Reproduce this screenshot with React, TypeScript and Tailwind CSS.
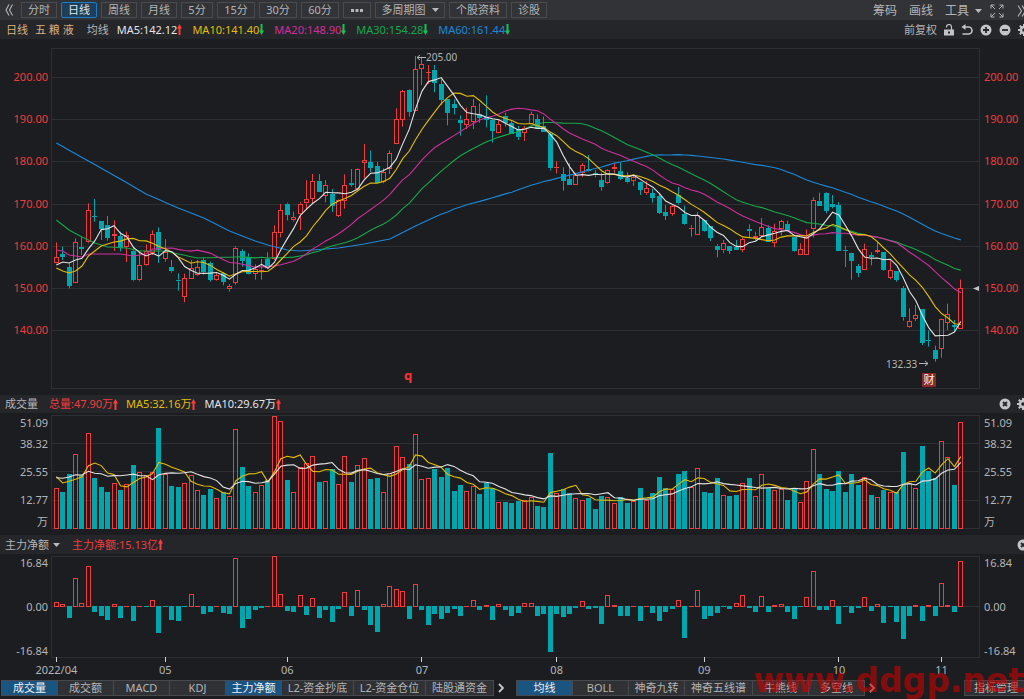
import type { ReactNode } from "react";

type Dir = 1 | -1;
// dir, high, low, body top, body bottom
type Bar = [Dir, number, number, number, number];
type Point = [number, number];

const UP = "#f03c3c";
const DOWN = "#00a6ad";
const GRID = "#2e2f33";
const YELLOW = "#e3bd09";
const WHITE = "#e4e4e4";

// bar values are thirds of a unit below each segment's base
const segments: { base: number; bars: Bar[] }[] = [
  {
    base: 141,
    bars: [
      [1, 187, 250, 231, 248], [-1, 200, 240, 222, 230], [-1, 250, 325, 261, 318], [1, 175, 309, 187, 308],
      [-1, 172, 225, 200, 207], [1, 70, 190, 91, 187], [-1, 57, 125, 108, 111], [-1, 123, 180, 123, 148],
      [-1, 108, 182, 134, 174], [1, 121, 213, 162, 168], [-1, 155, 214, 168, 204], [1, 155, 246, 166, 202],
      [-1, 200, 304, 212, 301], [1, 213, 304, 256, 301], [1, 193, 258, 213, 256], [1, 151, 225, 163, 218],
      [-1, 142, 249, 156, 209], [1, 177, 245, 216, 237], [-1, 240, 278, 260, 274], [-1, 280, 332, 299, 304],
      [1, 281, 367, 294, 350], [1, 240, 297, 265, 296], [1, 240, 287, 261, 284], [-1, 234, 284, 240, 277],
      [-1, 245, 305, 249, 299], [1, 280, 302, 286, 300], [-1, 277, 316, 280, 306], [1, 312, 335, 319, 328],
      [1, 198, 314, 203, 308], [-1, 208, 260, 213, 243], [-1, 220, 283, 230, 282], [1, 253, 299, 268, 281],
      [1, 237, 299, 269, 272], [-1, 217, 266, 237, 262],
    ],
  },
  {
    base: 1,
    bars: [
      [1, 556, 660, 576, 657], [1, 492, 592, 511, 580], [-1, 488, 541, 491, 525], [1, 515, 545, 532, 541],
      [1, 486, 570, 491, 523], [1, 421, 508, 478, 490], [1, 402, 490, 424, 476], [-1, 402, 455, 422, 455],
      [1, 420, 487, 436, 467], [-1, 447, 516, 462, 498], [1, 478, 531, 481, 528], [1, 403, 506, 436, 482],
      [-1, 387, 440, 428, 434], [1, 385, 447, 387, 447], [1, 312, 415, 360, 368], [-1, 332, 396, 367, 383],
      [-1, 366, 430, 378, 430], [1, 385, 430, 397, 427], [1, 331, 402, 340, 386], [1, 205, 313, 238, 313],
      [1, 150, 260, 154, 239], [-1, 148, 230, 150, 215], [1, 48, 213, 87, 212], [1, 50, 135, 72, 86],
      [1, 75, 132, 96, 99], [-1, 75, 157, 89, 129], [-1, 118, 195, 133, 180], [-1, 178, 256, 178, 218],
      [-1, 178, 223, 193, 204], [-1, 226, 287, 239, 248], [1, 203, 267, 238, 254], [1, 177, 267, 197, 245],
      [-1, 190, 248, 222, 234], [-1, 166, 262, 230, 240], [-1, 238, 308, 240, 272], [1, 240, 280, 253, 278],
    ],
  },
  {
    base: 51,
    bars: [
      [-1, 68, 110, 77, 100], [-1, 90, 131, 99, 131], [-1, 108, 150, 118, 142], [1, 108, 153, 114, 128],
      [1, 65, 103, 73, 101], [-1, 73, 117, 88, 116], [-1, 80, 126, 107, 126], [-1, 126, 242, 133, 235],
      [1, 214, 250, 231, 235], [-1, 232, 302, 253, 272], [-1, 220, 285, 267, 285], [1, 248, 285, 255, 284],
      [1, 219, 261, 226, 248], [-1, 195, 245, 237, 243], [-1, 240, 262, 250, 256], [-1, 248, 302, 270, 291],
      [1, 238, 282, 241, 280], [1, 218, 248, 231, 238], [-1, 218, 270, 243, 267], [-1, 247, 280, 263, 277],
      [1, 258, 288, 262, 272], [-1, 275, 315, 276, 300], [1, 273, 315, 295, 310], [-1, 296, 338, 309, 324],
      [-1, 311, 372, 319, 368], [-1, 345, 390, 366, 378], [1, 346, 377, 349, 371], [-1, 291, 344, 315, 340],
      [-1, 347, 404, 372, 402], [1, 405, 440, 413, 416], [1, 366, 435, 375, 434], [-1, 390, 425, 390, 423],
      [-1, 408, 453, 408, 444], [-1, 462, 502, 467, 480], [1, 450, 489, 459, 481], [-1, 467, 492, 467, 483],
      [-1, 450, 480, 470, 480],
    ],
  },
  {
    base: 111,
    bars: [
      [1, 263, 306, 267, 300], [-1, 223, 262, 236, 243], [1, 245, 272, 257, 265], [1, 204, 260, 232, 257],
      [-1, 226, 276, 235, 275], [1, 221, 292, 243, 278], [1, 210, 256, 214, 238], [-1, 212, 244, 222, 244],
      [-1, 262, 305, 262, 303], [1, 280, 314, 298, 314], [1, 238, 314, 262, 314], [1, 142, 262, 150, 238],
      [-1, 128, 168, 152, 168], [-1, 126, 190, 128, 182], [-1, 135, 175, 161, 171], [-1, 156, 303, 166, 303],
      [-1, 287, 351, 299, 304], [-1, 308, 389, 309, 332], [-1, 342, 381, 349, 369], [1, 281, 359, 298, 359],
      [-1, 307, 346, 316, 320], [1, 275, 310, 301, 305], [-1, 306, 362, 306, 359], [1, 330, 388, 360, 383],
      [-1, 362, 395, 362, 389], [-1, 408, 512, 415, 502], [1, 475, 533, 514, 531], [1, 465, 513, 496, 506],
      [-1, 477, 585, 477, 579], [-1, 541, 590, 570, 573], [-1, 587, 635, 600, 626], [1, 506, 623, 508, 597],
      [1, 461, 540, 493, 518], [-1, 510, 543, 525, 530], [1, 389, 537, 415, 536],
    ],
  },
];

const volumes = [
  124, 112, 164, 224, 161, 287, 153, 126, 112, 139, 118, 136, 192, 172, 161, 172, 302, 164, 128, 125, 137, 163, 117, 103,
  120, 92, 111, 100, 301, 187, 128, 112, 131, 146, 340, 325, 148, 112, 186, 199, 219, 142, 145, 180, 134, 220, 140, 192,
  212, 149, 152, 110, 167, 248, 215, 195, 286, 149, 154, 180, 156, 182, 113, 132, 115, 129, 105, 139, 122, 82, 80, 78,
  84, 88, 95, 69, 66, 228, 107, 120, 108, 92, 88, 92, 60, 99, 95, 77, 96, 77, 84, 123, 87, 108, 156, 124, 120, 165, 174,
  126, 182, 110, 107, 154, 101, 99, 102, 137, 154, 98, 164, 122, 116, 121, 88, 122, 82, 143, 239, 165, 120, 115, 173,
  112, 165, 132, 157, 102, 95, 118, 110, 112, 231, 139, 123, 249, 173, 154, 263, 215, 132, 322,
];

const netFlow = [
  15, 9, -37, 87, 12, 124, -18, -29, -41, 9, -35, 3, -46, 3, -4, 20, -82, -1, -43, -46, -1, 39, 3, -25, -18, 1, -22, -23,
  147, -65, -40, -13, -7, 1, 152, 39, -16, -18, 36, -26, 28, -37, -13, -49, -10, 45, -29, 50, -13, -56, -79, 9, 64, 53,
  48, -40, 70, -13, -56, -25, -40, -20, -10, -31, 3, 22, -13, 6, -43, 9, -13, -31, -22, 11, 11, -29, -23, -139, -23,
  -34, -25, -7, 18, -10, -7, -54, 36, 6, -29, -29, 3, -46, 3, -20, -46, -18, -10, 20, -95, 1, 51, -40, -29, -20, -4,
  -10, 11, 36, -7, -18, 33, -18, 6, 9, -18, -38, -4, 30, 108, -13, -13, 20, -53, -4, -20, -7, 30, -15, 9, -52, -4, -48,
  -100, -31, 6, -46, 6, -29, 72, 6, -19, 138,
];

const candles = segments.flatMap(({ base, bars }) =>
  bars.map(([dir, ...v]) => {
    const [high, low, top, bottom] = v.map((n) => base + n / 3);
    return { dir, high, low, top, bottom };
  })
);
const closes = candles.map((c) => (c.dir > 0 ? c.top : c.bottom));

const xAt = (i: number) => 56.3 + i * 6.415;
const snap = (v: number) => Math.floor(v) + 0.5;

// the first bars have no full window, so the average starts from known points
function average(values: number[], period: number, lead: Point[]) {
  return values.map((_, i) => {
    if (i >= period - 1) {
      return values.slice(i - period + 1, i + 1).reduce((a, b) => a + b, 0) / period;
    }
    const next = lead.findIndex((p) => p[0] >= i);
    if (next === -1) return lead[lead.length - 1][1];
    if (next === 0) return lead[0][1];
    const [x0, y0] = lead[next - 1];
    const [x1, y1] = lead[next];
    return y0 + ((y1 - y0) * (i - x0)) / (x1 - x0);
  });
}

const toPoints = (ys: number[]) => ys.map((y, i) => `${xAt(i).toFixed(1)},${y.toFixed(1)}`).join(" ");

const priceLines = [
  {
    color: "#1e88d8",
    ys: average(closes, 60, [
      [0, 104], [5, 122], [10, 140], [14, 155], [19, 169], [23, 179], [27, 192], [31, 202], [33, 206], [36, 211],
      [38, 212], [42, 210], [44, 209], [48, 205], [52, 200], [56, 187], [58, 181],
    ]),
  },
  {
    color: "#16a84a",
    ys: average(closes, 30, [
      [0, 181], [2, 191], [4, 198], [6, 204], [8, 208], [11, 209], [13, 212], [17, 212], [19, 215], [22, 219], [28, 218],
    ]),
  },
  {
    color: "#cf2f9c",
    ys: average(closes, 20, [
      [0, 211], [1, 212], [2, 216], [4, 218], [5, 215], [10, 215], [12, 217], [14, 215], [15, 210], [18, 209],
    ]),
  },
  {
    color: YELLOW,
    ys: average(closes, 10, [[0, 229], [1, 232], [2, 234], [3, 232], [4, 227], [5, 217], [6, 212], [7, 207], [8, 205]]),
  },
  { color: WHITE, ys: average(closes, 5, [[0, 226], [1, 223], [2, 224], [3, 221]]) },
];

const volumeLines = [
  { color: YELLOW, ys: average(volumes, 5, [[0, 157], [1, 138], [2, 143], [3, 149]]) },
  {
    color: WHITE,
    ys: average(volumes, 10, [[0, 154], [1, 152], [2, 156], [3, 163], [4, 162], [5, 173], [6, 167], [7, 166], [8, 158]]),
  },
];

const periods = [
  { label: "分时", cls: "w-9" },
  { label: "日线", cls: "w-9", active: true },
  { label: "周线", cls: "w-9" },
  { label: "月线", cls: "w-9" },
  { label: "5分", cls: "w-8" },
  { label: "15分", cls: "w-[38px]" },
  { label: "30分", cls: "w-[38px]" },
  { label: "60分", cls: "w-[38px]" },
];

const averages = [
  { label: "MA5:142.12", cls: "text-[#e4e4e4]", up: true },
  { label: "MA10:141.40", cls: "text-[#e3bd09]", up: false },
  { label: "MA20:148.90", cls: "text-[#cf2f9c]", up: false },
  { label: "MA30:154.28", cls: "text-[#16a84a]", up: false },
  { label: "MA60:161.44", cls: "text-[#1e88d8]", up: false },
];

const indicators = [
  { label: "成交量", cls: "w-14", active: true },
  { label: "成交额", cls: "w-14" },
  { label: "MACD", cls: "w-14" },
  { label: "KDJ", cls: "w-14" },
  { label: "主力净额", cls: "w-14", active: true },
  { label: "L2-资金抄底", cls: "w-[72px]" },
  { label: "L2-资金仓位", cls: "w-[72px]" },
  { label: "陆股通资金", cls: "w-[68px]" },
];

const overlays = [
  { label: "均线", cls: "w-14", active: true },
  { label: "BOLL", cls: "w-14" },
  { label: "神奇九转", cls: "w-14" },
  { label: "神奇五线谱", cls: "w-[68px]" },
  { label: "牛熊线", cls: "w-14" },
  { label: "多空线", cls: "w-14" },
];

const months: [string, number][] = [
  ["2022/04", 0], ["05", 17], ["06", 36], ["07", 57], ["08", 78], ["09", 101], ["10", 122], ["11", 138],
];

function Arrow({ up }: { up: boolean }) {
  return (
    <svg width="5" height="11" viewBox="0 0 5 11" className="shrink-0">
      <path
        d={up ? "M2.5 0L5 4.5H3.5V11H1.5V4.5H0z" : "M2.5 11L5 6.5H3.5V0H1.5V6.5H0z"}
        fill={up ? "#ff3b3b" : "#12c455"}
      />
    </svg>
  );
}

function Caret() {
  return (
    <svg width="7" height="4" viewBox="0 0 7 4" className="shrink-0">
      <path d="M0 0H7L3.5 4z" fill="#b9babc" />
    </svg>
  );
}

function RoundIcon({ d }: { d: string }) {
  return (
    <svg width="12" height="12" viewBox="0 0 12 12">
      <circle cx="6" cy="6" r="5.5" fill="#c3c4c6" />
      <path d={d} stroke="#25262a" strokeWidth="1.8" fill="none" />
    </svg>
  );
}

function GearIcon() {
  return (
    <svg width="12" height="12" viewBox="0 0 12 12">
      <circle cx="6" cy="6" r="3" fill="none" stroke="#c3c4c6" strokeWidth="2.4" />
      <path
        d="M6 0V2.5M6 9.5V12M0 6H2.5M9.5 6H12M1.8 1.8L3.5 3.5M8.5 8.5L10.2 10.2M10.2 1.8L8.5 3.5M3.5 8.5L1.8 10.2"
        stroke="#c3c4c6"
        strokeWidth="2"
      />
    </svg>
  );
}

function IconButton({ label, children }: { label: string; children: ReactNode }) {
  return (
    <button type="button" aria-label={label} className="flex shrink-0 items-center">
      {children}
    </button>
  );
}

function ToolButton({ cls, active, children }: { cls: string; active?: boolean; children: ReactNode }) {
  return (
    <button
      type="button"
      className={`flex h-4 shrink-0 items-center justify-center gap-1.5 border whitespace-nowrap ${cls} ${
        active ? "rounded-xs border-[#1c7fc4] bg-[#1d3f5b] text-[#e6e6e6]" : "border-[#4a4b4e] text-[#b4b5b7]"
      }`}
    >
      {children}
    </button>
  );
}

function TabBar({ tabs }: { tabs: { label: string; cls: string; active?: boolean }[] }) {
  return (
    <div className="flex shrink-0 border-r border-[#48494d]">
      {tabs.map((t) => (
        <button
          key={t.label}
          type="button"
          className={`flex h-4 items-center justify-center border-y border-l border-[#48494d] whitespace-nowrap ${t.cls} ${
            t.active ? "bg-[#1a5582] text-[#f0f0f0]" : "bg-[#303135] text-[#b4b5b7]"
          }`}
        >
          {t.label}
        </button>
      ))}
    </div>
  );
}

function Chevron() {
  return (
    <svg width="6" height="10" viewBox="0 0 6 10">
      <path d="M1 1L5 5L1 9" fill="none" stroke="#c8c9cb" strokeWidth="1.8" />
    </svg>
  );
}

function AxisLabels({ rows, fill }: { rows: [string, number][]; fill: string }) {
  return (
    <g fill={fill}>
      {rows.map(([text, y]) => (
        <g key={text}>
          <text x="48" y={y} textAnchor="end">{text}</text>
          <text x="984" y={y}>{text}</text>
        </g>
      ))}
    </g>
  );
}

function Column({ x, y, height, up }: { x: number; y: number; height: number; up: boolean }) {
  const left = Math.floor(x) - 2;
  if (!up || height < 2) {
    return <rect x={left} y={y} width="5" height={Math.max(height, 1)} fill={up ? UP : DOWN} />;
  }
  return <rect x={left + 0.5} y={y + 0.5} width="4" height={height - 1} fill="none" stroke={UP} />;
}

function PriceChart() {
  const rows = [200, 190, 180, 170, 160, 150, 140].map((p, i): [string, number] => [p.toFixed(2), Math.round(42 + i * 42.2)]);
  return (
    <svg viewBox="0 0 1024 356" className="block w-full text-[11px]" role="img" aria-label="日线">
      <rect x="51.5" y="9.5" width="928" height="340" fill="none" stroke={GRID} />
      {rows.map(([p, y]) => (
        <line key={p} x1="52" x2="979" y1={y - 3.5} y2={y - 3.5} stroke={GRID} />
      ))}
      <AxisLabels rows={rows} fill="#f03c3c" />
      {candles.map((c, i) => {
        const x = snap(xAt(i));
        const color = c.dir > 0 ? UP : DOWN;
        const top = Math.round(c.top);
        const height = Math.max(Math.round(c.bottom) - top, 1);
        return (
          <g key={i}>
            <line x1={x} x2={x} y1={c.high} y2={c.top} stroke={color} />
            <line x1={x} x2={x} y1={c.bottom} y2={c.low} stroke={color} />
            <Column x={x} y={top} height={height} up={c.dir > 0} />
          </g>
        );
      })}
      {priceLines.map((l) => (
        <polyline key={l.color} points={toPoints(l.ys)} fill="none" stroke={l.color} strokeWidth="1.1" />
      ))}
      <g fill="#b4b5b7" className="text-[10px]">
        <text x="426" y="22">205.00</text>
        <text x="886" y="329">132.33</text>
      </g>
      <path d="M417 18.5H426M420 16L417 18.5L420 21M919 324.5H928M925 322L928 324.5L925 327" fill="none" stroke="#b4b5b7" />
      <path d="M973 249.5L979 247V252z" fill="#c3c4c6" />
      <text x="404" y="341" fill="#ff3333" className="text-[13px] font-bold">q</text>
      <rect x="922" y="334" width="14" height="14" rx="1" fill="#8a2a2d" />
      <text x="929" y="345" textAnchor="middle" fill="#f4f4f4">财</text>
    </svg>
  );
}

function VolumeChart() {
  return (
    <svg viewBox="0 0 1024 122" className="block w-full text-[11px]" role="img" aria-label="成交量">
      <rect x="51.5" y="2.5" width="928" height="113" fill="none" stroke={GRID} />
      {[30.5, 58.5, 87.5].map((y) => (
        <line key={y} x1="52" x2="979" y1={y} y2={y} stroke={GRID} />
      ))}
      <AxisLabels rows={[["51.09", 14], ["38.32", 35], ["25.55", 63], ["12.77", 91], ["万", 113]]} fill="#b4b5b7" />
      {volumes.map((v, i) => {
        const height = Math.round(v / 3);
        return <Column key={i} x={xAt(i)} y={116 - height} height={height} up={candles[i].dir > 0} />;
      })}
      {volumeLines.map((l) => (
        <polyline
          key={l.color}
          points={toPoints(l.ys.map((v) => 116 - v / 3))}
          fill="none"
          stroke={l.color}
          strokeWidth="1.1"
        />
      ))}
    </svg>
  );
}

function NetFlowChart() {
  return (
    <svg viewBox="0 0 1024 125" className="block w-full text-[11px]" role="img" aria-label="主力净额">
      <path d="M51.5 2.5H979.5V103.5H51.5zM52 52.5H979" fill="none" stroke={GRID} />
      <AxisLabels rows={[["16.84", 13], ["0.00", 57], ["-16.84", 101]]} fill="#b4b5b7" />
      {netFlow.map((v, i) => {
        const height = Math.max(Math.round(Math.abs(v) / 3), 1);
        return <Column key={i} x={xAt(i)} y={v > 0 ? 53 - height : 52} height={height} up={v > 0} />;
      })}
      {months.map(([label, i]) => (
        <g key={label}>
          <line x1={snap(xAt(i))} x2={snap(xAt(i))} y1="103" y2="108" stroke="#d0d0d0" />
          <text x={xAt(i)} y="120" textAnchor="middle" fill="#b4b5b7">{label}</text>
        </g>
      ))}
    </svg>
  );
}

export default function App() {
  return (
    <main className="relative flex min-h-screen flex-col overflow-hidden bg-[#1c1d20] font-['Noto_Sans','Noto_Sans_CJK_SC',sans-serif] text-[11px] leading-4 text-[#b4b5b7]">
      <nav className="flex h-5 items-center overflow-hidden bg-[#323336] pl-[5px]">
        <IconButton label="收起">
          <svg width="8" height="12" viewBox="0 0 8 12" className="mr-2">
            <path d="M4 0.5L1 6L4 11.5M7.5 0.5L4.5 6L7.5 11.5" fill="none" stroke="#b4b5b7" strokeWidth="1.1" />
          </svg>
        </IconButton>
        <div className="flex gap-1">
          {periods.map((p) => (
            <ToolButton key={p.label} cls={p.cls} active={p.active}>
              {p.label}
            </ToolButton>
          ))}
          <ToolButton cls="w-7">
            <svg width="12" height="3" viewBox="0 0 12 3">
              <path d="M0 0H3V3H0zM4.5 0H7.5V3H4.5zM9 0H12V3H9z" fill="#b4b5b7" />
            </svg>
          </ToolButton>
          <ToolButton cls="w-[70px]">
            多周期图
            <Caret />
          </ToolButton>
          <ToolButton cls="w-[58px]">个股资料</ToolButton>
          <ToolButton cls="w-9">诊股</ToolButton>
        </div>
        <div className="-mr-0.5 ml-auto flex shrink-0 items-center gap-3 pt-px pl-3 text-[12px]">
          <button type="button">筹码</button>
          <button type="button">画线</button>
          <div className="flex items-center gap-2">
            <button type="button" className="flex items-center gap-1.5">
              工具
              <Caret />
            </button>
            <IconButton label="全屏">
              <svg width="14" height="14" viewBox="0 0 14 14">
                <path
                  d="M1 4.5V1H4.5M1 1L5 5M9.5 1H13V4.5M13 1L9 5M1 9.5V13H4.5M1 13L5 9M9.5 13H13V9.5M13 13L9 9"
                  fill="none"
                  stroke="#b4b5b7"
                />
              </svg>
            </IconButton>
          </div>
          <IconButton label="展开">
            <svg width="10" height="12" viewBox="0 0 10 12">
              <path d="M2 0.5L5.5 6L2 11.5M6 0.5L9.5 6L6 11.5" fill="none" stroke="#b4b5b7" strokeWidth="1.1" />
            </svg>
          </IconButton>
        </div>
      </nav>

      <header className="flex h-[19px] items-center overflow-hidden bg-[#25262a] pl-1.5 whitespace-nowrap">
        <span className="text-[#dcb182]">日线</span>
        <h1 className="ml-[7px] text-[#dcb182]">五 粮 液</h1>
        <span className="mr-2 ml-[13px]">均线</span>
        <div className="flex gap-2.5">
          {averages.map((a) => (
            <span key={a.label} className={`flex items-center ${a.cls}`}>
              {a.label}
              <Arrow up={a.up} />
            </span>
          ))}
        </div>
        <div className="-mr-1.5 ml-auto flex shrink-0 items-center gap-[7px] pl-3">
          <button type="button">前复权</button>
          <IconButton label="锁定">
            <svg width="10" height="12" viewBox="0 0 10 12">
              <path d="M2.5 3.5V3A2.5 2.5 0 0 1 7.5 3V6" fill="none" stroke="#c3c4c6" strokeWidth="1.2" />
              <path d="M0 5.5H10V11.5H0zM4 7.5V9.5H6V7.5z" fill="#c3c4c6" fillRule="evenodd" />
            </svg>
          </IconButton>
          <IconButton label="撤销">
            <svg width="12" height="12" viewBox="0 0 12 12">
              <path d="M3 3H7.5A3.5 3.5 0 0 1 7.5 10H1.5" fill="none" stroke="#c3c4c6" strokeWidth="1.6" />
              <path d="M0.5 3L4.5 0V6z" fill="#c3c4c6" />
            </svg>
          </IconButton>
          <IconButton label="放大">
            <RoundIcon d="M6 3V9M3 6H9" />
          </IconButton>
          <IconButton label="缩小">
            <RoundIcon d="M3 6H9" />
          </IconButton>
          <IconButton label="设置">
            <GearIcon />
          </IconButton>
        </div>
      </header>

      <PriceChart />

      <section>
        <div className="flex h-[18px] items-center gap-2 overflow-hidden bg-[#25262a] pl-[5px] whitespace-nowrap">
          <h2 className="mr-[3px]">成交量</h2>
          <span className="flex items-center text-[#f03c3c]">
            总量:47.90万
            <Arrow up />
          </span>
          <span className="flex items-center text-[#e3bd09]">
            MA5:32.16万
            <Arrow up />
          </span>
          <span className="flex items-center text-[#e4e4e4]">
            MA10:29.67万
            <Arrow up />
          </span>
          <div className="-mr-[5px] ml-auto flex gap-1.5">
            <IconButton label="关闭成交量">
              <RoundIcon d="M4 4L8 8M8 4L4 8" />
            </IconButton>
            <IconButton label="设置成交量">
              <GearIcon />
            </IconButton>
          </div>
        </div>
        <VolumeChart />
      </section>

      <section>
        <div className="flex h-[19px] items-center overflow-hidden bg-[#25262a] pl-[5px] whitespace-nowrap">
          <button type="button" className="flex items-center gap-1">
            主力净额
            <Caret />
          </button>
          <span className="ml-3 flex items-center text-[#f03c3c]">
            主力净额:15.13亿
            <Arrow up />
          </span>
          <div className="-mr-[5px] ml-auto flex">
            <IconButton label="关闭主力净额">
              <RoundIcon d="M4 4L8 8M8 4L4 8" />
            </IconButton>
          </div>
        </div>
        <NetFlowChart />
      </section>

      <footer className="flex items-center overflow-hidden pt-px pl-px">
        <TabBar tabs={indicators} />
        <div className="ml-1 flex shrink-0 gap-3">
          <IconButton label="更多指标">
            <Chevron />
          </IconButton>
          <TabBar tabs={overlays} />
        </div>
        <div className="ml-1 flex">
          <IconButton label="更多均线">
            <Chevron />
          </IconButton>
        </div>
        <button
          type="button"
          className="-mr-1 ml-auto flex h-4 w-16 shrink-0 items-center justify-center border border-[#48494d] bg-[#303135]"
        >
          指标管理
        </button>
      </footer>

      <div className="pointer-events-none absolute right-0 bottom-0 font-['DejaVu_Sans',sans-serif] text-[33px] leading-9 font-bold text-[#c80000]/60">
        www.ddgp.net
      </div>
    </main>
  );
}
